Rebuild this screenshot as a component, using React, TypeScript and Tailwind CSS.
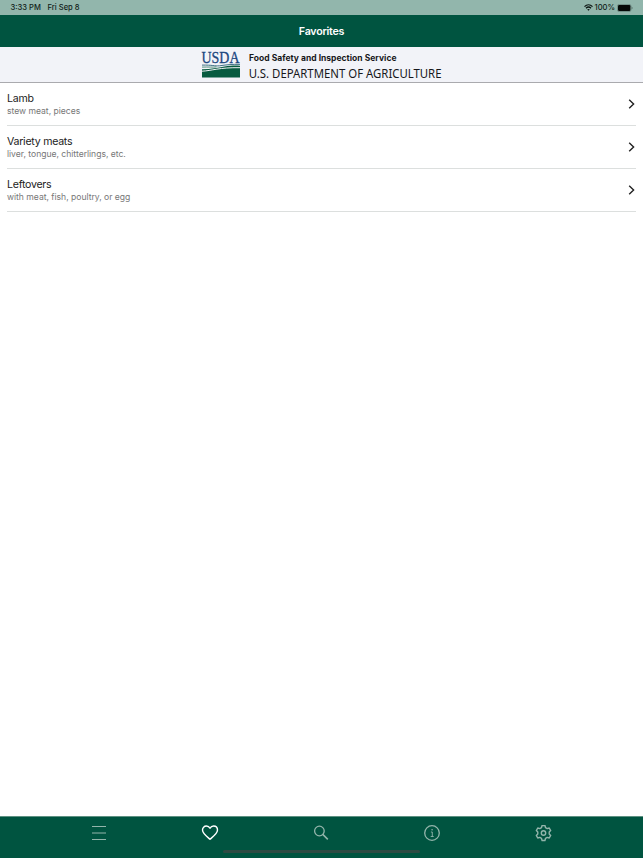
import type { ReactNode } from 'react'

type Favorite = {
  title: string
  detail: string
}

const favorites: Favorite[] = [
  { title: 'Lamb', detail: 'stew meat, pieces' },
  { title: 'Variety meats', detail: 'liver, tongue, chitterlings, etc.' },
  { title: 'Leftovers', detail: 'with meat, fish, poultry, or egg' },
]

const StatusBar = () => (
  <div className="flex h-[15px] shrink-0 items-center bg-[#92b6ac] pt-px pr-[10px] pl-[10.5px] text-[7.6px] font-medium text-[#111d19]">
    <span className="w-[37px] whitespace-nowrap">3:33 PM</span>
    <span className="whitespace-nowrap">Fri Sep 8</span>
    <div className="ml-auto flex items-center">
      <svg width="9" height="7" viewBox="0 0 9 7" className="mr-[2px]">
        <g fill="none" stroke="#0c1512" strokeWidth="1.3">
          <path d="M.5 2.6C2.8.3 6.2.3 8.5 2.6" />
          <path d="M2 4.3c1.4-1.4 3.6-1.4 5 0" />
        </g>
        <path d="M4.5 6.8 3.2 5.5c.7-.7 1.9-.7 2.6 0Z" fill="#0c1512" />
      </svg>
      <span className="mr-[2px]">100%</span>
      <svg width="16" height="8" viewBox="0 0 16 8">
        <rect x=".4" y=".4" width="13.6" height="7.2" rx="1.9" fill="none" stroke="#577069" strokeWidth=".6" />
        <rect x="1" y="1" width="12.4" height="6" rx="1.2" fill="#050807" />
        <path d="M14.6 2.8q1 .2 1 1.2t-1 1.2Z" fill="#577069" />
      </svg>
    </div>
  </div>
)

const UsdaLogo = () => (
  <svg width="39" height="28" viewBox="-.5 0 39 28" className="shrink-0 overflow-visible">
    <text
      x="0"
      y="11.8"
      textLength="38"
      lengthAdjust="spacingAndGlyphs"
      fill="#1c477f"
      stroke="#1c477f"
      strokeWidth=".3"
      fontSize="16.8"
      fontFamily="Liberation Serif, serif"
    >
      USDA
    </text>
    <path d="M.5 14.1C11 13.9 13 15.2 18 14.8 26 13.6 31 13.2 38.5 13.4" fill="none" stroke="#2c6379" strokeWidth=".9" />
    <path d="M.5 16.1C7 15.9 11 16.3 15 15.9" fill="none" stroke="#2d7660" strokeWidth=".8" />
    <path d="M.5 18.2C9 18.3 16 16.6 23 15.4 29 14.5 34 14.5 38.5 14.7V26.6H.5Z" fill="#075b40" />
    <path d="M.5 20.2C10 19.8 18 16.3 38.5 16.7" fill="none" stroke="#f2f3f8" strokeWidth="1" />
  </svg>
)

const Banner = () => (
  <div className="flex h-9 shrink-0 justify-center border-b border-[#aaaaae] bg-[#f2f3f8] pt-1">
    <div className="flex w-[241px] gap-[9px]">
      <UsdaLogo />
      <svg width="194" height="30" viewBox="0 0 194 30" className="shrink-0 overflow-visible">
        <text x="0" y="10" textLength="147.5" fill="#17171b" fontSize="8.5" fontWeight="700" fontFamily="Inter, sans-serif">
          Food Safety and Inspection Service
        </text>
        <text x="-.3" y="26.7" textLength="192.8" fill="#17171b" fontSize="12.4" fontFamily="Noto Sans, sans-serif" lengthAdjust="spacingAndGlyphs">
          U.S. DEPARTMENT OF AGRICULTURE
        </text>
      </svg>
    </div>
  </div>
)

const FavoriteRow = ({ title, detail }: Favorite) => (
  <li className="flex h-[43px] items-center justify-between border-b border-[#dcdfde] pr-[1.5px]">
    <div className="pt-px">
      <div className="text-[10.6px] leading-[12px] tracking-[-0.26px] text-[#222]">{title}</div>
      <div className="text-[8.6px] leading-[12px] tracking-[-0.02px] text-[#777]">{detail}</div>
    </div>
    <svg width="7" height="10" viewBox="0 0 7 10" fill="none" stroke="#222" strokeWidth="1.4">
      <path d="m1.2.8 4.4 4.2-4.4 4.2" />
    </svg>
  </li>
)

// six-toothed outline, centred on 0,0
const gearPoints = Array.from({ length: 6 }, (_, i) => {
  const corners = [
    [-20, 5.8],
    [-11, 7.6],
    [11, 7.6],
    [20, 5.8],
  ]
  return corners
    .map(([offset, r]) => {
      const a = ((i * 60 - 90 + offset) * Math.PI) / 180
      return `${(r * Math.cos(a)).toFixed(2)},${(r * Math.sin(a)).toFixed(2)}`
    })
    .join(' ')
}).join(' ')

const Tab = ({ label, children }: { label: string; children: ReactNode }) => (
  <button aria-label={label} className="flex h-8 w-[111px] items-center justify-center">
    {children}
  </button>
)

const TabBar = () => (
  <nav className="flex h-[42px] shrink-0 flex-col items-center border-t border-[#5e9182] bg-[#005440]">
    <div className="flex h-[31px] w-[556px] pr-px text-[#93b5ab]">
      <Tab label="Menu">
        <svg width="14" height="16" viewBox="0 0 14 16" stroke="currentColor" strokeWidth="1">
          <path d="M0 1.5h14M0 8h14M0 14.5h14" />
        </svg>
      </Tab>
      <Tab label="Favorites">
        <svg width="18" height="16" viewBox="-.3 0 18 16" fill="none" stroke="#fff" strokeWidth="1.4" strokeLinejoin="round">
          <path d="M8.7 14.2C5.6 11.6 1.2 8.6 1.2 5.1 1.2 2.7 2.9 1 5.1 1 6.7 1 8 1.9 8.7 3.3 9.4 1.9 10.7 1 12.3 1 14.5 1 16.2 2.7 16.2 5.1c0 3.5-4.4 6.5-7.5 9.1Z" />
        </svg>
      </Tab>
      <Tab label="Search">
        <svg width="16" height="16" viewBox="0 0 16 16" fill="none" stroke="currentColor" strokeWidth="1.3">
          <circle cx="6.4" cy="6" r="4.8" />
          <path d="m9.8 9.4 5 5" strokeWidth="1.5" />
        </svg>
      </Tab>
      <Tab label="Info">
        <svg width="16" height="16" viewBox="0 0 16 16" fill="none" stroke="currentColor" strokeWidth="1.3">
          <circle cx="8" cy="8" r="7.3" />
          <path d="M6.9 7h1.4v4.5M6.7 11.5h3" strokeWidth=".9" />
          <circle cx="8.1" cy="4.7" r=".8" fill="currentColor" stroke="none" />
        </svg>
      </Tab>
      <Tab label="Settings">
        <svg width="17" height="17" viewBox="-8.5 -8 17 17" fill="none" stroke="currentColor" strokeWidth="1.4" strokeLinejoin="round">
          <polygon points={gearPoints} />
          <circle r="2.2" />
        </svg>
      </Tab>
    </div>
    <div className="mt-[2px] h-[3px] w-[197px] rounded-full bg-[#2d4b43]" />
  </nav>
)

export default function App() {
  return (
    <div className="flex h-[858px] w-[643px] flex-col overflow-hidden bg-white font-['Inter',sans-serif]">
      <StatusBar />
      <header className="flex h-8 shrink-0 items-center justify-center bg-[#005440] pt-[2px] text-[10.7px] font-semibold tracking-[-0.25px] text-white">
        Favorites
      </header>
      <Banner />
      <ul className="flex-1 px-[7px]">
        {favorites.map((favorite) => (
          <FavoriteRow key={favorite.title} {...favorite} />
        ))}
      </ul>
      <TabBar />
    </div>
  )
}
